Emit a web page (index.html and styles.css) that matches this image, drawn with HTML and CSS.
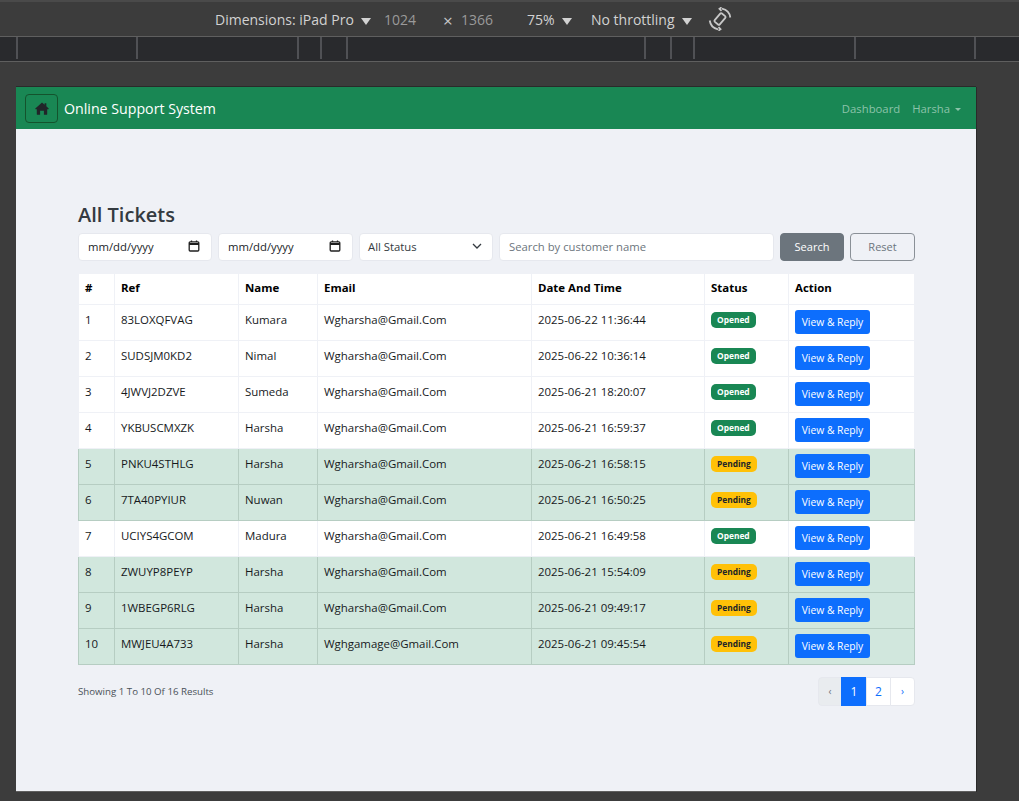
FILE: index.html
```html
<!DOCTYPE html>
<html lang="en">
<head>
  <meta charset="UTF-8" />
  <meta name="viewport" content="width=device-width, initial-scale=1.0" />
  <title>All Tickets</title>
  <link rel="stylesheet" href="styles.css">
</head>
<body>

  <!-- Device toolbar -->
  <div class="devbar">
    <span class="dev-item dev-dim">Dimensions: iPad Pro <i class="caret"></i></span>
    <span class="dev-num dev-w">1024</span>
    <span class="dev-x">×</span>
    <span class="dev-num dev-h">1366</span>
    <span class="dev-item dev-zoom">75% <i class="caret"></i></span>
    <span class="dev-item dev-net">No throttling <i class="caret"></i></span>
    <svg class="dev-rotate" width="24" height="24" viewBox="0 0 24 24" fill="none" stroke="#c8c8c8" stroke-width="1.8">
      <rect x="8.700" y="6.500" width="6.600" height="11" rx="1.200" transform="rotate(40 12 12)"/>
      <path d="M14 1.700A10.500 10.500 0 0 1 22.300 10.500M10 22.300A10.500 10.500 0 0 1 1.700 13.500"/>
      <path d="M13.500 .3 11.500 1.800 13.500 3.800M10.500 23.700 12.500 22.200 10.500 20.200"/>
    </svg>
  </div>

  <div class="ruler">
    <i class="tick t1"></i><i class="tick t2"></i><i class="tick t3"></i><i class="tick t4"></i><i class="tick t5"></i>
    <i class="tick t6"></i><i class="tick t7"></i><i class="tick t8"></i><i class="tick t9"></i><i class="tick t10"></i>
  </div>

  <div class="stage">
    <div class="viewport">

      <nav class="navbar">
        <button class="home-btn" aria-label="Home">
          <svg width="14" height="13" viewBox="0 0 16 15" fill="#212529">
            <path d="M8 .6 .3 7.4c-.4.4-.1 1 .4 1H2v5.700c0 .4.3.7.7.7h3.100V10h4.400v4.800h3.100c.4 0 .7-.3.7-.7V8.400h1.300c.5 0 .8-.6.4-1L13 5V1.500h-2v1.700z"/>
          </svg>
        </button>
        <span class="brand">Online Support System</span>
        <div class="nav-links">
          <a href="#">Dashboard</a>
          <a href="#" class="dropdown">Harsha</a>
        </div>
      </nav>

      <main class="content">
        <h1>All Tickets</h1>

        <form class="filters">
          <div class="field date-field">mm/dd/yyyy
            <svg width="12" height="12" viewBox="0 0 12 12" fill="none" stroke="#1f1f1f" stroke-width="1.3"><rect x="1.200" y="1.800" width="9.600" height="9.200" rx="1"/><path d="M1 4h10" stroke-width="2"/><path d="M3.500 .5v1.500M8.500 .5v1.500"/></svg>
          </div>
          <div class="field date-field date-to">mm/dd/yyyy
            <svg width="12" height="12" viewBox="0 0 12 12" fill="none" stroke="#1f1f1f" stroke-width="1.3"><rect x="1.200" y="1.800" width="9.600" height="9.200" rx="1"/><path d="M1 4h10" stroke-width="2"/><path d="M3.500 .5v1.500M8.500 .5v1.500"/></svg>
          </div>
          <div class="field status-field">All Status
            <svg width="10" height="6" viewBox="0 0 10 6" fill="none" stroke="#343a40" stroke-width="1.300"><path d="M1 1l4 4 4-4"/></svg>
          </div>
          <div class="field search-field">Search by customer name</div>
          <button type="button" class="btn btn-search">Search</button>
          <button type="button" class="btn btn-reset">Reset</button>
        </form>

        <table class="tickets">
          <colgroup>
            <col class="c-num"><col class="c-ref"><col class="c-name"><col class="c-email">
            <col class="c-date"><col class="c-status"><col class="c-action">
          </colgroup>
          <thead>
            <tr><th>#</th><th>Ref</th><th>Name</th><th>Email</th><th>Date And Time</th><th>Status</th><th>Action</th></tr>
          </thead>
          <tbody>
            <tr><td>1</td><td>83LOXQFVAG</td><td>Kumara</td><td>Wgharsha@Gmail.Com</td><td>2025-06-22 11:36:44</td><td><span class="badge opened">Opened</span></td><td><a class="view-btn" href="#">View &amp; Reply</a></td></tr>
            <tr><td>2</td><td>SUDSJM0KD2</td><td>Nimal</td><td>Wgharsha@Gmail.Com</td><td>2025-06-22 10:36:14</td><td><span class="badge opened">Opened</span></td><td><a class="view-btn" href="#">View &amp; Reply</a></td></tr>
            <tr><td>3</td><td>4JWVJ2DZVE</td><td>Sumeda</td><td>Wgharsha@Gmail.Com</td><td>2025-06-21 18:20:07</td><td><span class="badge opened">Opened</span></td><td><a class="view-btn" href="#">View &amp; Reply</a></td></tr>
            <tr><td>4</td><td>YKBUSCMXZK</td><td>Harsha</td><td>Wgharsha@Gmail.Com</td><td>2025-06-21 16:59:37</td><td><span class="badge opened">Opened</span></td><td><a class="view-btn" href="#">View &amp; Reply</a></td></tr>
            <tr class="row-pending"><td>5</td><td>PNKU4STHLG</td><td>Harsha</td><td>Wgharsha@Gmail.Com</td><td>2025-06-21 16:58:15</td><td><span class="badge pending">Pending</span></td><td><a class="view-btn" href="#">View &amp; Reply</a></td></tr>
            <tr class="row-pending"><td>6</td><td>7TA40PYIUR</td><td>Nuwan</td><td>Wgharsha@Gmail.Com</td><td>2025-06-21 16:50:25</td><td><span class="badge pending">Pending</span></td><td><a class="view-btn" href="#">View &amp; Reply</a></td></tr>
            <tr><td>7</td><td>UCIYS4GCOM</td><td>Madura</td><td>Wgharsha@Gmail.Com</td><td>2025-06-21 16:49:58</td><td><span class="badge opened">Opened</span></td><td><a class="view-btn" href="#">View &amp; Reply</a></td></tr>
            <tr class="row-pending"><td>8</td><td>ZWUYP8PEYP</td><td>Harsha</td><td>Wgharsha@Gmail.Com</td><td>2025-06-21 15:54:09</td><td><span class="badge pending">Pending</span></td><td><a class="view-btn" href="#">View &amp; Reply</a></td></tr>
            <tr class="row-pending"><td>9</td><td>1WBEGP6RLG</td><td>Harsha</td><td>Wgharsha@Gmail.Com</td><td>2025-06-21 09:49:17</td><td><span class="badge pending">Pending</span></td><td><a class="view-btn" href="#">View &amp; Reply</a></td></tr>
            <tr class="row-pending"><td>10</td><td>MWJEU4A733</td><td>Harsha</td><td>Wghgamage@Gmail.Com</td><td>2025-06-21 09:45:54</td><td><span class="badge pending">Pending</span></td><td><a class="view-btn" href="#">View &amp; Reply</a></td></tr>
          </tbody>
        </table>

        <div class="table-foot">
          <p class="showing">Showing 1 To 10 Of 16 Results</p>
          <ul class="pagination">
            <li class="disabled">‹</li>
            <li class="active">1</li>
            <li>2</li>
            <li class="last">›</li>
          </ul>
        </div>
      </main>
    </div>
  </div>

</body>
</html>
```

FILE: styles.css
```css
* {
  box-sizing: border-box;
}

html, body {
  height: 100%;
}

body {
  margin: 0;
  height: 801px;
  overflow: hidden;
  background: #3c3c3c;
  font-family: "Open Sans", "Noto Sans", Arial, sans-serif;
  display: flex;
  flex-direction: column;
}

/* Device toolbar */
.devbar {
  height: 37px;
  border-top: 2px solid #4a4a4a;
  border-bottom: 1px solid #5f5f5f;
  background: #3c3c3c;
  position: relative;
  color: #d2d2d2;
  font-size: 14px;
  display: flex;
  align-items: center;
  padding-left: 215px;
}

.dev-item {
  white-space: nowrap;
}

.caret {
  display: inline-block;
  width: 0;
  height: 0;
  margin-left: 4px;
  vertical-align: 0;
  border-left: 5px solid transparent;
  border-right: 5px solid transparent;
  border-top: 7px solid #d2d2d2;
}

.dev-num {
  color: #9a9a9a;
}

.dev-dim {
  width: 169px;
}

.dev-w {
  width: 58px;
}

.dev-x {
  width: 19px;
  padding: 3px 0 0 1px;
  color: #c8c8c8;
  font-size: 17px;
  line-height: 17px;
}

.dev-h {
  width: 33px;
}

.dev-zoom {
  margin-left: 33px;
  width: 64px;
}

.dev-net {
  width: 118px;
}

.dev-rotate {
  position: absolute;
  left: 708px;
  top: 5px;
}

.ruler {
  height: 25px;
  background: #292a2d;
  border-bottom: 1px solid #5f5f5f;
  position: relative;
}

.tick {
  position: absolute;
  top: 0;
  width: 2px;
  height: 22px;
  background: #505155;
}

.t1 { left: 16px; }
.t2 { left: 136px; }
.t3 { left: 297px; }
.t4 { left: 320px; }
.t5 { left: 346px; }
.t6 { left: 644px; }
.t7 { left: 670px; }
.t8 { left: 693px; }
.t9 { left: 854px; }
.t10 { left: 974px; }

.stage {
  padding: 25px 43px 0 16px;
  height: 730px;
}

.viewport {
  height: 705px;
  background: #eff1f6;
  border-bottom: 1px solid #5f5f5f;
  box-shadow: 0 -1px 0 #2a2a2a, 1px 0 0 #2a2a2a;
}

/* Navbar */
.navbar {
  height: 42px;
  background: #198754;
  display: flex;
  align-items: center;
  padding: 0 15px 0 9px;
}

.home-btn {
  width: 33px;
  height: 29px;
  background: transparent;
  border: 1px solid #14532d;
  border-radius: 4px;
  padding: 0;
  display: flex;
  align-items: center;
  justify-content: center;
}

.brand {
  color: #fff;
  font-size: 14.200px;
  margin-left: 6px;
}

.nav-links {
  margin-left: auto;
  display: flex;
  gap: 12px;
  font-size: 11.300px;
}

.nav-links a {
  color: #8cc3aa;
  text-decoration: none;
}

.dropdown::after {
  content: "";
  display: inline-block;
  margin-left: 5px;
  vertical-align: 2px;
  border-left: 3px solid transparent;
  border-right: 3px solid transparent;
  border-top: 3px solid #8cc3aa;
}

/* Tickets */
.content {
  padding: 73px 61px 0 62px;
}

h1 {
  margin: 0 0 5px;
  font-size: 20px;
  line-height: 26px;
  font-weight: 600;
  color: #343a40;
}

.filters {
  display: flex;
  gap: 6px;
  height: 28px;
  margin-bottom: 12px;
}

.field {
  background: #fff;
  border: 1px solid #e6e8ee;
  border-radius: 4px;
  font-size: 11.300px;
  color: #212529;
  display: flex;
  align-items: center;
  justify-content: space-between;
  padding: 0 11px 2px 9px;
}

.date-field {
  width: 134px;
}

.date-to {
  width: 135px;
}

.status-field {
  width: 134px;
  padding: 0 10px 2px 8px;
  color: #343a40;
}

.search-field {
  width: 275px;
  color: #6c757d;
}

.btn {
  height: 28px;
  border-radius: 4px;
  font: inherit;
  font-size: 11px;
  padding: 0 0 2px;
  color: #fff;
}

.btn-search {
  width: 64px;
  background: #6c757d;
  border: 1px solid #6c757d;
}

.btn-reset {
  width: 65px;
  background: transparent;
  border: 1px solid #8a9097;
  color: #6c757d;
}

.tickets {
  width: 836px;
  table-layout: fixed;
  border-collapse: collapse;
  background: #fff;
  font-size: 11.450px;
  color: #16191c;
}

.c-num { width: 36px; }
.c-ref { width: 124px; }
.c-name { width: 79px; }
.c-email { width: 214px; }
.c-date { width: 173px; }
.c-status { width: 84px; }
.c-action { width: 126px; }

.tickets th,
.tickets td {
  border: 1px solid #eff1f6;
  padding: 0 6px;
  text-align: left;
  white-space: nowrap;
}

.tickets th {
  height: 31px;
  padding-bottom: 3px;
  color: #000;
  font-weight: 700;
}

.tickets td {
  height: 36px;
  padding-bottom: 6px;
}

.row-pending td {
  background: #d1e7dd;
  border-color: #b6cdc2;
}

.badge {
  display: inline-block;
  font-size: 8.400px;
  font-weight: 700;
  line-height: 16px;
  height: 16px;
  padding: 0 6px;
  border-radius: 5px;
  vertical-align: 2px;
}

.opened {
  background: #198754;
  color: #fff;
}

.pending {
  background: #ffc107;
  color: #212529;
}

.view-btn {
  display: block;
  width: 75px;
  height: 24px;
  line-height: 25px;
  margin-top: 4px;
  text-align: center;
  background: #0d6efd;
  color: #fff;
  border-radius: 3px;
  font-size: 10.300px;
  text-decoration: none;
}

.table-foot {
  display: flex;
  justify-content: space-between;
  align-items: center;
  margin-top: 11px;
  height: 30px;
}

.showing {
  margin: 0;
  font-size: 9.700px;
  color: #495057;
}

.pagination {
  list-style: none;
  display: flex;
  margin: 0;
  padding: 0;
  height: 29px;
  width: 97px;
  font-size: 12px;
}

.pagination li {
  width: 25px;
  display: flex;
  align-items: center;
  justify-content: center;
  background: #fff;
  color: #0d6efd;
  border: 1px solid #e6e8ee;
  margin-left: -1px;
}

.pagination .disabled {
  margin-left: 0;
  width: 24px;
  background: #e9ecef;
  color: #6c757d;
  font-size: 10px;
  border-radius: 4px 0 0 4px;
}

.pagination .active {
  width: 26px;
  background: #0d6efd;
  border-color: #0d6efd;
  color: #fff;
}

.pagination .last {
  font-size: 10px;
  border-radius: 0 4px 4px 0;
}
```
